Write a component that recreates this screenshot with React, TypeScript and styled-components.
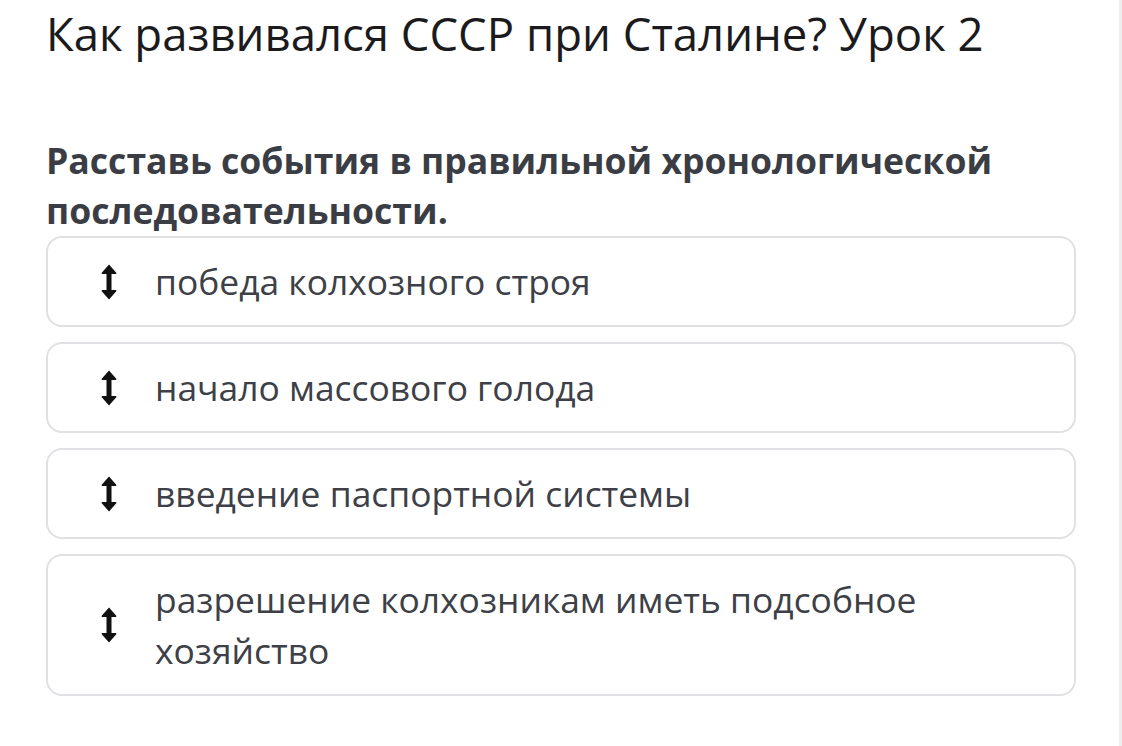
import React from "react";
import styled, { createGlobalStyle } from "styled-components";

const Global = createGlobalStyle`
  html, body { margin: 0; padding: 0; background: #ffffff; }
  body { font-family: "Open Sans", "Noto Sans", sans-serif; }
`;

const Page = styled.div`
  display: flex;
  width: 1122px;
  min-height: 746px;
  box-sizing: border-box;
`;

const Main = styled.main`
  flex: 1;
  padding: 2px 0 0 46px;
  box-sizing: border-box;
`;

const Content = styled.div`
  width: 1030px;
`;

const Scrollbar = styled.div`
  width: 3px;
  background: #eeeeef;
`;

const Title = styled.h1`
  margin: 0;
  font-size: 45.5px;
  line-height: 62px;
  font-weight: 400;
  color: #1b1b1d;
  letter-spacing: 0;
`;

const Question = styled.h2`
  margin: 71px 0 0;
  font-size: 35.6px;
  line-height: 50px;
  font-weight: 700;
  color: #3a3d44;
`;

const List = styled.ul`
  list-style: none;
  margin: 1px 0 0;
  padding: 0;
  display: flex;
  flex-direction: column;
  gap: 15px;
`;

const Item = styled.li`
  display: flex;
  align-items: center;
  border: 2px solid #e0e1e4;
  border-radius: 16px;
  padding: 18px 24px 18px 53px;
  background: #fff;
`;

const Handle = styled.span`
  flex: 0 0 16px;
  display: flex;
  justify-content: center;
  margin-right: 38px;
`;

const ItemText = styled.span`
  font-size: 35.4px;
  line-height: 51px;
  color: #3d4047;
`;

const ArrowIcon = () => (
  <svg width="16" height="36" viewBox="0 0 16 36" aria-hidden>
    <path
      d="M8 0.5 L15.5 9 Q15.5 10 14.5 10 L10.5 10 L10.5 26 L14.5 26 Q15.5 26 15.5 27 L8 35.5 L0.5 27 Q0.5 26 1.5 26 L5.5 26 L5.5 10 L1.5 10 Q0.5 10 0.5 9 Z"
      fill="#111"
    />
  </svg>
);

const items = [
  "победа колхозного строя",
  "начало массового голода",
  "введение паспортной системы",
  "разрешение колхозникам иметь подсобное хозяйство",
];

export default function App() {
  return (
    <Page>
      <Global />
      <Main>
        <Content>
          <Title>Как развивался СССР при Сталине? Урок 2</Title>
          <Question>Расставь события в правильной хронологической последовательности.</Question>
          <List>
            {items.map((t) => (
              <Item key={t}>
                <Handle>
                  <ArrowIcon />
                </Handle>
                <ItemText>{t}</ItemText>
              </Item>
            ))}
          </List>
        </Content>
      </Main>
      <Scrollbar />
    </Page>
  );
}
